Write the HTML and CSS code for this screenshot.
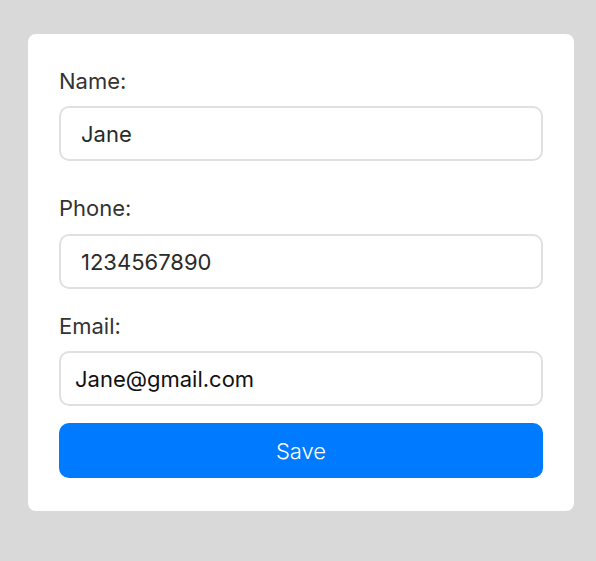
FILE: index.html
```html
<!DOCTYPE html>
<html>
<head>
<meta charset="utf-8">
<link rel="stylesheet" href="styles.css">
</head>
<body>
<div class="page">
  <form class="card">
    <label class="label label-name">Name:</label>
    <div class="field field-pad">Jane</div>
    <label class="label label-phone">Phone:</label>
    <div class="field field-pad">1234567890</div>
    <label class="label label-email">Email:</label>
    <div class="field field-email">Jane@gmail.com</div>
    <div class="btn">Save</div>
  </form>
</div>
</body>
</html>
```
FILE: styles.css
```css
html, body {
  margin: 0;
  padding: 0;
  background: #d9d9d9;
  font-family: Inter, "Noto Sans", sans-serif;
}
.page {
  padding: 34px 22px 0 28px;
  width: 546px;
}
.card {
  display: flex;
  flex-direction: column;
  background: #ffffff;
  border-radius: 8px;
  padding: 34px 31px 33px 31px;
  height: 477px;
  box-sizing: border-box;
}
.label {
  display: block;
  font-size: 22px;
  line-height: 26px;
  color: #333333;
  margin-bottom: 12px;
}
.label-phone {
  margin-top: 34px;
  margin-bottom: 13px;
}
.label-email {
  margin-top: 24px;
}
.field {
  height: 55px;
  box-sizing: border-box;
  border: 2px solid #e0e0e0;
  border-radius: 10px;
  font-size: 22px;
  line-height: 52px;
  color: #2a2a2a;
}
.field-pad {
  padding-left: 20px;
}
.field-email {
  padding-left: 14px;
  color: #111111;
}
.btn {
  margin-top: 17px;
  height: 55px;
  border-radius: 10px;
  background: #007bff;
  color: #ffffff;
  font-size: 22px;
  font-weight: 300;
  line-height: 56px;
  text-align: center;
}
```
